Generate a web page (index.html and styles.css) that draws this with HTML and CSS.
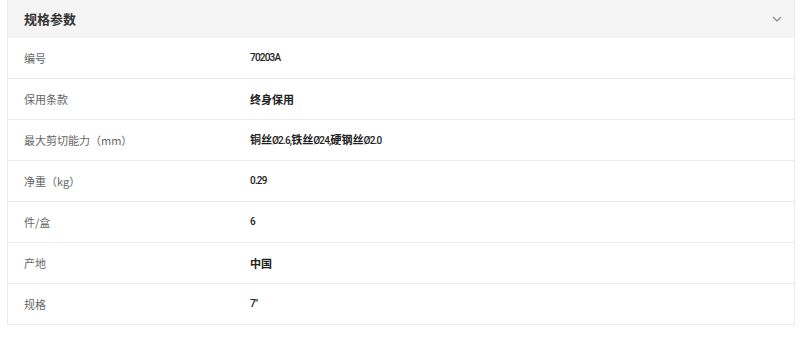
FILE: index.html
```html
<!DOCTYPE html>
<html lang="zh">
<head>
<meta charset="utf-8">
<link rel="stylesheet" href="styles.css">
</head>
<body>
<section class="card">
  <header class="card-head">
    <h2 class="title">规格参数</h2>
    <svg class="chev" width="10" height="6" viewBox="0 0 10 6"><path d="M1 1 L5 5 L9 1" fill="none" stroke="#8a8f99" stroke-width="1.3"/></svg>
  </header>
  <div class="row"><span class="label">编号</span><span class="value num">70203A</span></div>
  <div class="row"><span class="label">保用条款</span><span class="value strong">终身保用</span></div>
  <div class="row"><span class="label">最大剪切能力（mm）</span><span class="value strong">铜丝<span class="num">Ø2.6,</span>铁丝<span class="num">Ø24,</span>硬钢丝<span class="num">Ø2.0</span></span></div>
  <div class="row"><span class="label">净重（kg）</span><span class="value num">0.29</span></div>
  <div class="row"><span class="label">件/盒</span><span class="value num">6</span></div>
  <div class="row"><span class="label">产地</span><span class="value strong">中国</span></div>
  <div class="row"><span class="label">规格</span><span class="value num">7"</span></div>
</section>
</body>
</html>
```

FILE: styles.css
```css
html, body {
  margin: 0;
  padding: 0;
  background: #fff;
}
body {
  padding: 0 8px 0 7px;
  font-family: "Noto Sans CJK SC", "Noto Sans", sans-serif;
}
.card {
  border: 1px solid #ebebeb;
  border-top: none;
}
.card-head {
  height: 38px;
  background: #f5f5f5;
  display: flex;
  align-items: center;
  justify-content: space-between;
  padding: 0 12px 0 16px;
}
.title {
  margin: 0;
  font-size: 13px;
  font-weight: 700;
  color: #333;
  line-height: 1;
  position: relative;
  top: -1px;
}
.chev {
  display: block;
}
.row {
  display: grid;
  grid-template-columns: 226px 1fr;
  align-items: center;
  height: 40px;
  padding: 0 16px;
  border-bottom: 1px solid #ebebeb;
}
.row:last-child {
  border-bottom: none;
}
.label {
  font-size: 11px;
  color: #666;
  line-height: 1;
}
.value {
  font-size: 11px;
  color: #222;
  line-height: 1;
}
.strong {
  font-weight: 700;
}
.num {
  font-family: Roboto, "Liberation Sans", sans-serif;
  font-size: 10px;
  font-weight: 500;
  letter-spacing: -0.8px;
  color: #222;
}
```
